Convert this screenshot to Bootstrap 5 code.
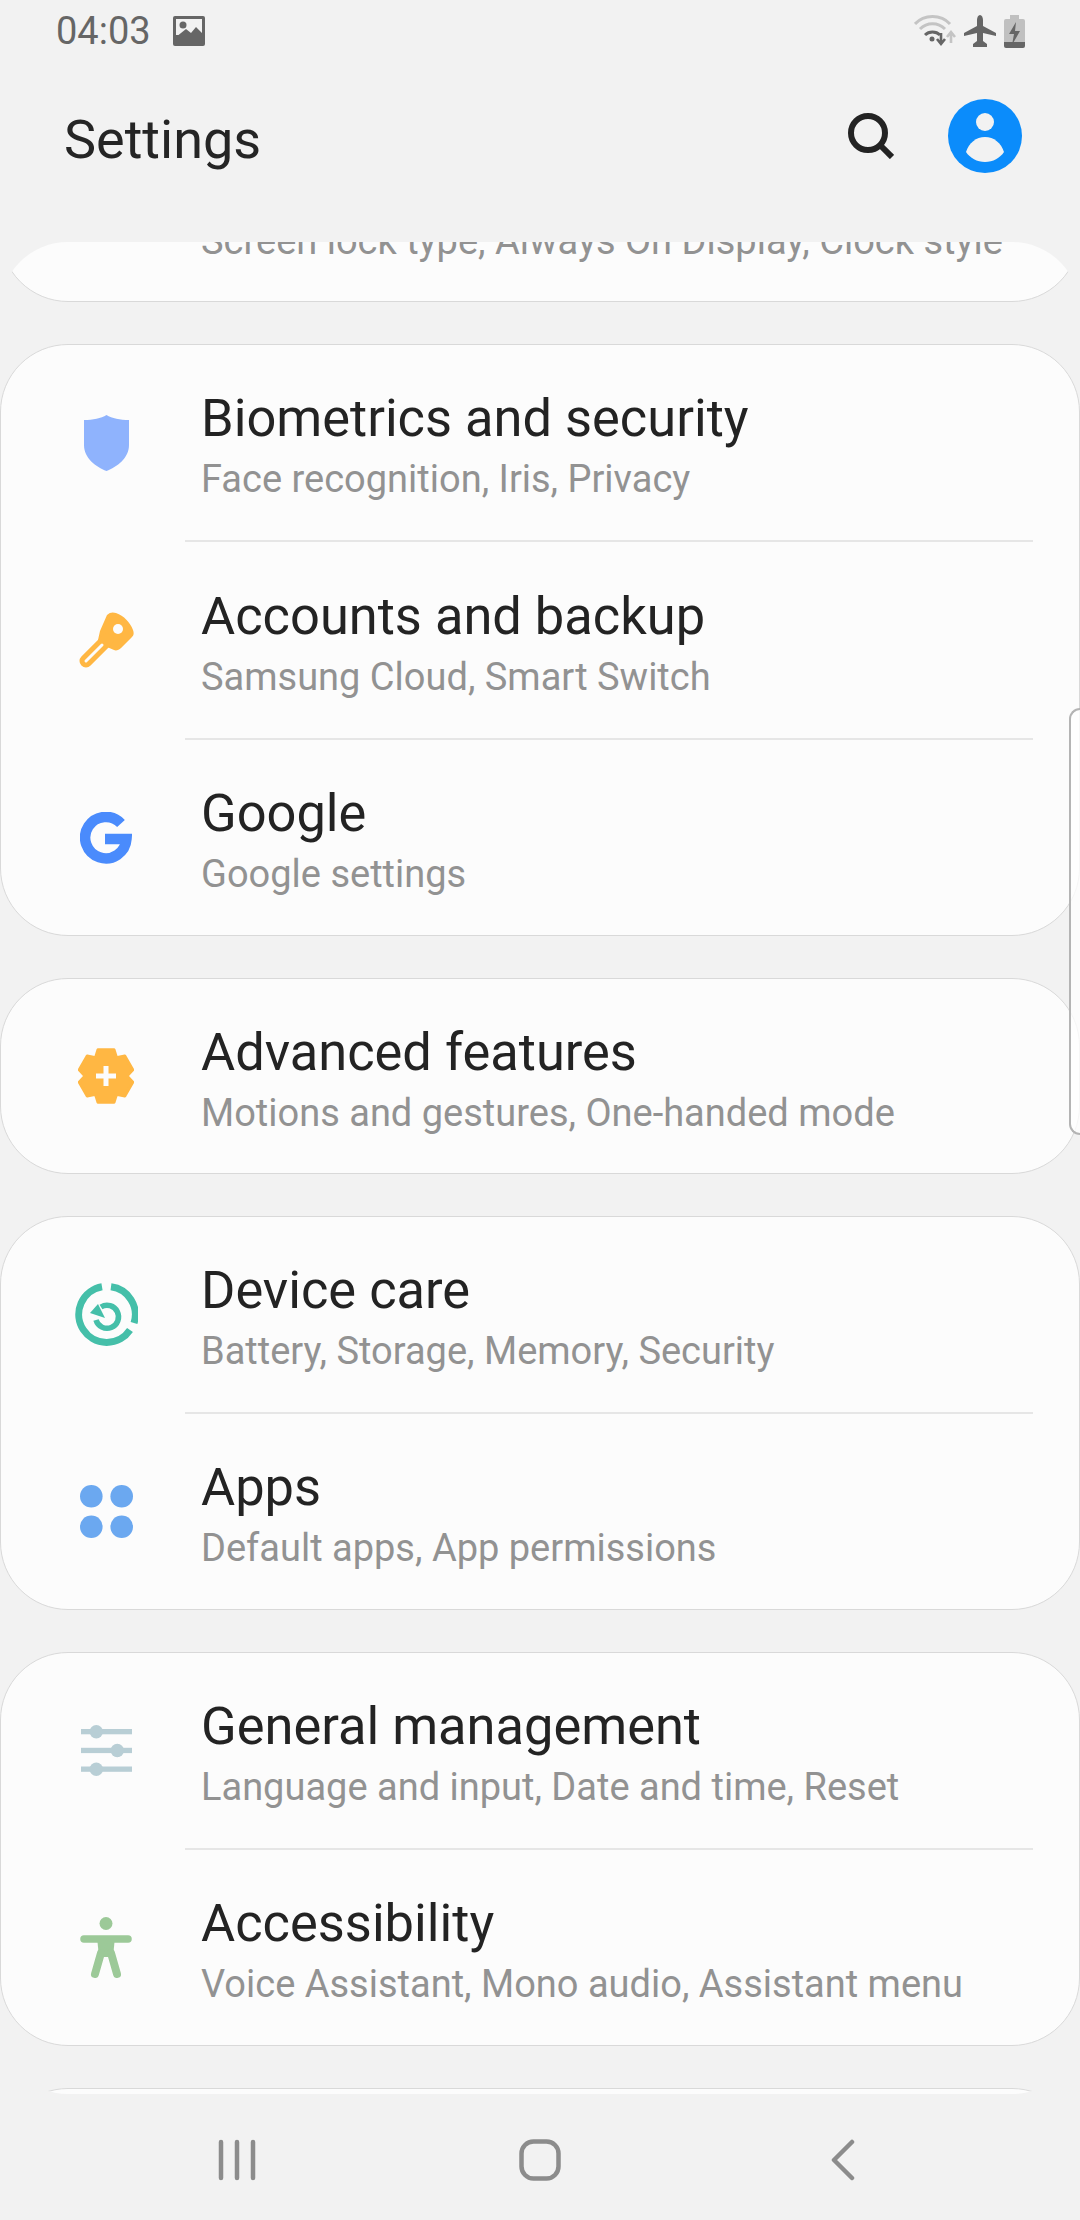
<!DOCTYPE html>
<html lang="en">
<head>
    <title>Settings</title>
    <meta charset="UTF-8">
    <meta name="viewport" content="width=device-width, initial-scale=1.0">
    <link href="https://cdn.jsdelivr.net/npm/bootstrap@5.3.0/dist/css/bootstrap.min.css" rel="stylesheet">
    <style>
        body { width: 1080px; height: 2220px; overflow: hidden; background: #f2f2f2; font-family: Roboto, "Liberation Sans", sans-serif; position: relative; }
        .status-bar { height: 62px; padding: 0 55px 0 56px; }
        .status-left { gap: 22px; }
        .status-time { font-size: 38px; line-height: 1; color: #666; }
        .app-bar { height: 180px; padding: 0 58px 24px 64px; }
        .app-title { font-size: 54px; font-weight: 400; line-height: 1; color: #252525; margin: 0; }
        .app-actions { gap: 54px; margin-bottom: 8px; }
        .list-window { height: 1852px; overflow: hidden; border-radius: 68px; }
        .group-card { background: #fcfcfc; border: 1px solid #d9d9d9; border-radius: 68px; margin-bottom: 42px; overflow: hidden; }
        .group-card.first-card { margin-top: -137px; }
        .set-row { height: 195px; }
        .set-row.row-wide { height: 196px; }
        .set-row.row-short { height: 194px; }
        .set-icon { width: 200px; padding-left: 10px; flex-shrink: 0; }
        .set-text { padding-top: 5px; }
        .first-card .set-text { padding-top: 7px; }
        .set-title { font-size: 52.4px; line-height: 60px; color: #232323; }
        .set-sub { font-size: 38px; line-height: 46px; color: #929292; margin-top: 8px; }
        .row-line { height: 2px; background: #e6e6e6; margin: 0 46px 0 184px; }
        .nav-keys { height: 126px; padding-top: 6px; }
        .nav-cell { width: 303px; }
        .edge-handle { position: absolute; top: 708px; right: 0; width: 11px; height: 427px; border: 2px solid #b4b4b4; border-right: 0; border-radius: 14px 0 0 14px; background: rgba(255, 255, 255, .75); }
    </style>
</head>
<body>
    <!-- status bar -->
    <div class="status-bar d-flex align-items-center justify-content-between">
        <div class="status-left d-flex align-items-center">
            <span class="status-time">04:03</span>
            <svg width="32" height="30" viewBox="0 0 32 30"><rect width="32" height="30" rx="2" fill="#666"/><rect x="3" y="3" width="26" height="16" fill="#f2f2f2"/><circle cx="10" cy="9" r="3.5" fill="#666"/><path d="M3 21 13 13l5 4 5-6 6 6v5H3z" fill="#666"/></svg>
        </div>
        <div class="d-flex align-items-center gap-2">
            <svg width="42" height="34" viewBox="0 0 42 34" fill="none"><path d="M1 10C10 0 27 0 36 10" stroke="#c4c4c4" stroke-width="3"/><path d="M6 15c7-7 18-7 25 0" stroke="#c4c4c4" stroke-width="3"/><path d="M11 21c4-4 11-4 15 0" stroke="#666" stroke-width="3"/><circle cx="18" cy="25" r="2.5" fill="#666"/><path d="M27 19v10M23 25l4 5 4-5" stroke="#666" stroke-width="2.6"/><path d="M37 29V19M33 23l4-5 4 5" stroke="#c4c4c4" stroke-width="2.6"/></svg>
            <svg width="32" height="32" viewBox="0 0 32 32"><path d="M16 0c1.800 0 3 2.500 3 5v6l13 7v3l-13-3v8l4 3v3H9v-3l4-3v-8L0 21v-3l13-7V5c0-2.500 1.200-5 3-5z" fill="#666"/></svg>
            <svg width="21" height="33" viewBox="0 0 21 33"><path d="M6 0h9v4h4a2 2 0 0 1 2 2v21H0V6a2 2 0 0 1 2-2h4z" fill="#c0c0c0"/><path d="M0 27h21v4a2 2 0 0 1-2 2H2a2 2 0 0 1-2-2z" fill="#666"/><path d="M12 7 5 19h5l-2 11 8-14h-5z" fill="#666"/></svg>
        </div>
    </div>

    <!-- app bar -->
    <div class="app-bar d-flex align-items-center justify-content-between">
        <h1 class="app-title">Settings</h1>
        <div class="app-actions d-flex align-items-center">
            <svg width="46" height="46" viewBox="0 0 46 46" fill="none"><circle cx="20" cy="20" r="17" stroke="#232323" stroke-width="6"/><path d="M32 32l12 12" stroke="#232323" stroke-width="6"/></svg>
            <svg width="74" height="74" viewBox="0 0 74 74"><circle cx="37" cy="37" r="37" fill="#0b8cfb"/><circle cx="37" cy="23" r="9" fill="#f2f2f2"/><path d="M18 53C21 44 28 38 37 38S53 44 56 53C52 59 45 63 37 63S22 59 18 53z" fill="#f2f2f2"/></svg>
        </div>
    </div>

    <!-- scrolling list -->
    <div class="list-window">
        <div class="group-card first-card">
            <div class="set-row d-flex align-items-center">
                <div class="set-icon"></div>
                <div class="set-text">
                    <div class="set-title">&nbsp;</div>
                    <div class="set-sub">Screen lock type, Always On Display, Clock style</div>
                </div>
            </div>
        </div>

        <div class="group-card">
            <div class="set-row d-flex align-items-center">
                <div class="set-icon d-flex justify-content-center">
                    <svg width="45" height="56" viewBox="0 0 45 56"><path d="M22.500 0C28 3.500 36 5 45 5v25c0 13-12 22-22.500 26C12 52 0 43 0 30V5c9 0 17-1.500 22.500-5z" fill="#8fb3fd"/></svg>
                </div>
                <div class="set-text">
                    <div class="set-title">Biometrics and security</div>
                    <div class="set-sub">Face recognition, Iris, Privacy</div>
                </div>
            </div>
            <div class="row-line"></div>
            <div class="set-row row-wide d-flex align-items-center">
                <div class="set-icon d-flex justify-content-center">
                    <svg width="55" height="56" viewBox="0 0 55 56" fill="none"><path d="M28 3c3-3 6-3 9-2 8 3 14 9 17 17 1 3 1 5-1 7L42 36c-2 2-5 3-7 2l-7-3-9-7 2-9z" fill="#ffb743"/><path d="M28 28 7 49" stroke="#ffb743" stroke-width="13" stroke-linecap="round"/><path d="M23 33 7 49" stroke="#fcfcfc" stroke-width="3" stroke-linecap="round"/><circle cx="39" cy="17" r="5" fill="#fcfcfc"/></svg>
                </div>
                <div class="set-text">
                    <div class="set-title">Accounts and backup</div>
                    <div class="set-sub">Samsung Cloud, Smart Switch</div>
                </div>
            </div>
            <div class="row-line"></div>
            <div class="set-row d-flex align-items-center">
                <div class="set-icon d-flex justify-content-center">
                    <svg width="52" height="52" viewBox="0 0 52 52" fill="none"><path d="M41 11.500A20.700 20.700 0 1 0 46.500 27H25" stroke="#4a8bfc" stroke-width="10.500"/></svg>
                </div>
                <div class="set-text">
                    <div class="set-title">Google</div>
                    <div class="set-sub">Google settings</div>
                </div>
            </div>
        </div>

        <div class="group-card">
            <div class="set-row row-short d-flex align-items-center">
                <div class="set-icon d-flex justify-content-center">
                    <svg width="56" height="58" viewBox="0 0 56 58"><path d="M20 2.700H36L38.500 10.800 46.800 8.900 54.800 22.800 49 29 54.800 35.200 46.800 49.100 38.500 47.200 36 55.300H20L17.500 47.200 9.200 49.100 1.200 35.200 7 29 1.200 22.800 9.200 8.900 17.500 10.800z" fill="#ffb743" stroke="#ffb743" stroke-width="3" stroke-linejoin="round"/><path d="M28 19v20M18 29h20" stroke="#fcfcfc" stroke-width="5"/></svg>
                </div>
                <div class="set-text">
                    <div class="set-title">Advanced features</div>
                    <div class="set-sub">Motions and gestures, One-handed mode</div>
                </div>
            </div>
        </div>

        <div class="group-card">
            <div class="set-row d-flex align-items-center">
                <div class="set-icon d-flex justify-content-center">
                    <svg width="63" height="63" viewBox="0 0 63 63" fill="none"><g stroke="#45bfa9"><path d="M36 3.800A28 28 0 0 1 59 40" stroke-width="7"/><path d="M55 47A28 28 0 1 1 27 3.800" stroke-width="7"/><path d="M26 24A11.500 11.500 0 1 1 21 37" stroke-width="5.500"/></g><path d="M23 21 15 30l15 5z" fill="#45bfa9"/></svg>
                </div>
                <div class="set-text">
                    <div class="set-title">Device care</div>
                    <div class="set-sub">Battery, Storage, Memory, Security</div>
                </div>
            </div>
            <div class="row-line"></div>
            <div class="set-row d-flex align-items-center">
                <div class="set-icon d-flex justify-content-center">
                    <svg width="53" height="53" viewBox="0 0 53 53" fill="#6ba8f0"><circle cx="11.300" cy="11.300" r="11.300"/><circle cx="41.700" cy="11.300" r="11.300"/><circle cx="11.300" cy="41.700" r="11.300"/><circle cx="41.700" cy="41.700" r="11.300"/></svg>
                </div>
                <div class="set-text">
                    <div class="set-title">Apps</div>
                    <div class="set-sub">Default apps, App permissions</div>
                </div>
            </div>
        </div>

        <div class="group-card">
            <div class="set-row d-flex align-items-center">
                <div class="set-icon d-flex justify-content-center">
                    <svg width="51" height="51" viewBox="0 0 51 51" fill="#b8ced5"><rect y="4" width="51" height="5.300"/><rect y="22.800" width="51" height="5.300"/><rect y="41.500" width="51" height="5.300"/><circle cx="15.300" cy="6.700" r="6.700"/><circle cx="36.300" cy="25.500" r="6.700"/><circle cx="15.300" cy="44.200" r="6.700"/></svg>
                </div>
                <div class="set-text">
                    <div class="set-title">General management</div>
                    <div class="set-sub">Language and input, Date and time, Reset</div>
                </div>
            </div>
            <div class="row-line"></div>
            <div class="set-row d-flex align-items-center">
                <div class="set-icon d-flex justify-content-center">
                    <svg width="52" height="62" viewBox="0 0 52 62" fill="none"><g fill="#9cc998"><circle cx="26" cy="6.500" r="6.500"/><path d="M17 20h18l-2 20H19z"/></g><g stroke="#9cc998" stroke-linecap="round"><path d="M4 22h44" stroke-width="7.500"/><path d="M21 36 15 57M31 36l6 21" stroke-width="8"/></g></svg>
                </div>
                <div class="set-text">
                    <div class="set-title">Accessibility</div>
                    <div class="set-sub">Voice Assistant, Mono audio, Assistant menu</div>
                </div>
            </div>
        </div>

        <div class="group-card set-row"></div>
    </div>

    <!-- navigation keys -->
    <div class="nav-keys d-flex align-items-center justify-content-center">
        <div class="nav-cell d-flex justify-content-center">
            <svg width="38" height="42" viewBox="0 0 38 42" fill="none"><path d="M3 3v36M19 3v36M35 3v36" stroke="#8c8c8c" stroke-width="4.500" stroke-linecap="round"/></svg>
        </div>
        <div class="nav-cell d-flex justify-content-center">
            <svg width="42" height="42" viewBox="0 0 42 42" fill="none"><rect x="2.500" y="2.500" width="37" height="37" rx="12" stroke="#8c8c8c" stroke-width="4.500"/></svg>
        </div>
        <div class="nav-cell d-flex justify-content-center">
            <svg width="24" height="42" viewBox="0 0 24 42" fill="none"><path d="M21 3 3 21l18 18" stroke="#8c8c8c" stroke-width="4.500" stroke-linecap="round" stroke-linejoin="round"/></svg>
        </div>
    </div>

    <div class="edge-handle"></div>

    <script src="https://cdn.jsdelivr.net/npm/bootstrap@5.3.0/dist/js/bootstrap.bundle.min.js"></script>
</body>
</html>
